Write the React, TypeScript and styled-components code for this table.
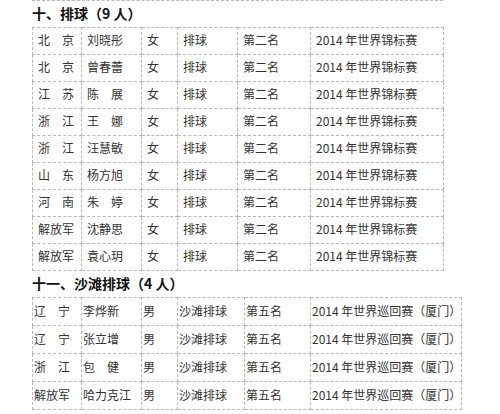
import styled, { createGlobalStyle } from "styled-components";

const GlobalStyle = createGlobalStyle`
  html, body {
    margin: 0;
    padding: 0;
    background: #fff;
  }
  body {
    font-family: "Noto Sans CJK SC", "Noto Sans", sans-serif;
    color: #222;
  }
`;

const Page = styled.div`
  padding-left: 32px;
  width: 468px;
`;

const PrevEdge = styled.div`
  width: 411px;
  height: 0;
  border-top: 1px dashed #b8b8b8;
`;

const Heading = styled.h3`
  margin: 0;
  height: 26px;
  line-height: 24px;
  font-size: 14px;
  font-weight: 700;
  color: #111;
  white-space: nowrap;
`;

const Table = styled.table<{ $width: number }>`
  width: ${(p) => p.$width}px;
  table-layout: fixed;
  border-collapse: collapse;
`;

const Cell = styled.td<{ $pad: number; $h: number }>`
  height: ${(p) => p.$h}px;
  padding: 0 0 2px ${(p) => p.$pad}px;
  border: 1px dashed #b8b8b8;
  font-size: 12px;
  line-height: 14px;
  color: #333;
  white-space: nowrap;
  overflow: hidden;
  vertical-align: middle;
  box-sizing: border-box;
`;

type Section = {
  title: string;
  widths: number[];
  pad: number;
  rowH: number;
  rows: string[][];
};

const volleyball: Section = {
  title: "十、排球（9 人）",
  widths: [49, 60, 36, 60, 73, 133],
  pad: 5,
  rowH: 27,
  rows: [
    ["北　京", "刘晓彤", "女", "排球", "第二名", "2014 年世界锦标赛"],
    ["北　京", "曾春蕾", "女", "排球", "第二名", "2014 年世界锦标赛"],
    ["江　苏", "陈　展", "女", "排球", "第二名", "2014 年世界锦标赛"],
    ["浙　江", "王　娜", "女", "排球", "第二名", "2014 年世界锦标赛"],
    ["浙　江", "汪慧敏", "女", "排球", "第二名", "2014 年世界锦标赛"],
    ["山　东", "杨方旭", "女", "排球", "第二名", "2014 年世界锦标赛"],
    ["河　南", "朱　婷", "女", "排球", "第二名", "2014 年世界锦标赛"],
    ["解放军", "沈静思", "女", "排球", "第二名", "2014 年世界锦标赛"],
    ["解放军", "袁心玥", "女", "排球", "第二名", "2014 年世界锦标赛"],
  ],
};

const beach: Section = {
  title: "十一、沙滩排球（4 人）",
  widths: [49, 60, 36, 67, 66, 151],
  pad: 1,
  rowH: 28,
  rows: [
    ["辽　宁", "李烨新", "男", "沙滩排球", "第五名", "2014 年世界巡回赛（厦门）"],
    ["辽　宁", "张立增", "男", "沙滩排球", "第五名", "2014 年世界巡回赛（厦门）"],
    ["浙　江", "包　健", "男", "沙滩排球", "第五名", "2014 年世界巡回赛（厦门）"],
    ["解放军", "哈力克江", "男", "沙滩排球", "第五名", "2014 年世界巡回赛（厦门）"],
  ],
};

const ResultTable = ({ section }: { section: Section }) => {
  const total = section.widths.reduce((a, b) => a + b, 0);
  return (
    <>
      <Heading>{section.title}</Heading>
      <Table $width={total}>
        <colgroup>
          {section.widths.map((w, i) => (
            <col key={i} style={{ width: w }} />
          ))}
        </colgroup>
        <tbody>
          {section.rows.map((row, r) => (
            <tr key={r}>
              {row.map((text, c) => (
                <Cell key={c} $pad={section.pad} $h={section.rowH}>
                  {text}
                </Cell>
              ))}
            </tr>
          ))}
        </tbody>
      </Table>
    </>
  );
};

export default function App() {
  return (
    <>
      <GlobalStyle />
      <Page>
        <PrevEdge />
        <ResultTable section={volleyball} />
        <ResultTable section={beach} />
      </Page>
    </>
  );
}
